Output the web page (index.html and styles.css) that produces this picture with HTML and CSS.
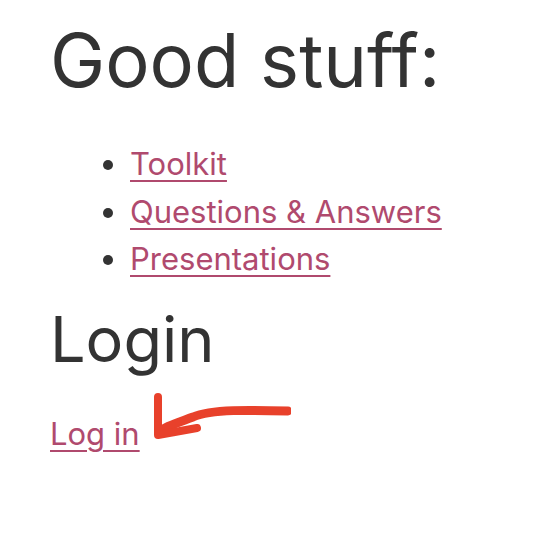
FILE: index.html
```html
<!DOCTYPE html>
<html lang="en">
<head>
    <meta charset="UTF-8">
    <meta name="viewport" content="width=device-width, initial-scale=1.0">
    <title>Good stuff</title>
    <link rel="stylesheet" href="styles.css">
</head>
<body>
    <div class="page">
        <h1>Good stuff:</h1>
        <ul class="links">
            <li><a href="#">Toolkit</a></li>
            <li><a href="#">Questions &amp; Answers</a></li>
            <li><a href="#">Presentations</a></li>
        </ul>

        <h2>Login</h2>
        <p class="login-line">
            <a href="#">Log in</a>
            <svg class="arrow" width="150" height="60" viewBox="0 0 150 60">
                <path d="M147 26 C 110 25, 70 24, 52 32 C 36 38, 22 42, 18 48" fill="none" stroke="#e8412b" stroke-width="9" stroke-linecap="round"/>
                <path d="M17 12 L 17 50 L 56 43" fill="none" stroke="#e8412b" stroke-width="8" stroke-linecap="round" stroke-linejoin="round"/>
            </svg>
        </p>
    </div>
</body>
</html>
```

FILE: styles.css
```css
    body {
        font-family: Inter, "Noto Sans", sans-serif;
        color: #333;
        background-color: #fff;
        margin: 0;
        padding: 0;
    }

    .page {
        padding: 17px 50px;
    }

    h1 {
        font-size: 74px;
        font-weight: 400;
        margin: 0;
        line-height: 86px;
    }

    h2 {
        font-size: 63px;
        font-weight: 400;
        margin: 0;
        line-height: 76px;
    }

    a {
        color: #b04a6e;
        text-decoration: underline;
        text-underline-offset: 5px;
        text-decoration-thickness: 2px;
    }

    .links {
        font-size: 31px;
        line-height: 47.5px;
        margin: 37px 0 18px 0;
        padding-left: 80px;
    }

    .login-line {
        position: relative;
        font-size: 31px;
        margin: 38px 0 20px 0;
    }

    .arrow {
        position: absolute;
        left: 91px;
        top: -30px;
    }
```
